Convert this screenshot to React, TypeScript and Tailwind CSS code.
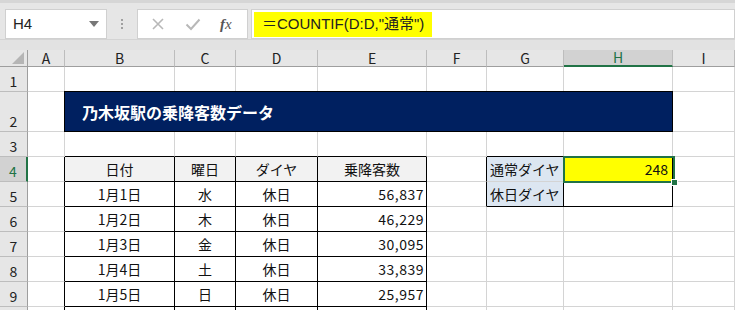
import React from "react";

const COLS = [28, 37, 110, 61, 82, 109, 60, 77, 109, 62];
const LETTERS = ["A", "B", "C", "D", "E", "F", "G", "H", "I"];
const ROWS = [25, 40, 25, 25, 25, 25, 25, 25, 25, 25];

const data = [
  ["1月1日", "水", "休日", "56,837"],
  ["1月2日", "木", "休日", "46,229"],
  ["1月3日", "金", "休日", "30,095"],
  ["1月4日", "土", "休日", "33,839"],
  ["1月5日", "日", "休日", "25,957"],
  ["", "", "", ""],
];

const font = { fontFamily: '"Noto Sans CJK JP", "Liberation Sans", sans-serif' };

function borderClasses(row: number, col: number) {
  const inTable = col >= 2 && col <= 5 && row >= 4;
  const inSide = (col === 7 || col === 8) && (row === 4 || row === 5);
  const rightBlack =
    inTable ||
    (col === 1 && row >= 4) ||
    (col === 6 && (row === 4 || row === 5)) ||
    inSide ||
    (col === 1 && row === 2);
  const bottomBlack =
    inTable ||
    (row === 3 && col >= 2 && col <= 5) ||
    (row === 3 && (col === 7 || col === 8)) ||
    (row === 5 && (col === 7 || col === 8));
  const rcls = rightBlack ? "border-r-black" : "border-r-[#d4d4d4]";
  const bcls = bottomBlack ? "border-b-black" : "border-b-[#d4d4d4]";
  return `border-r border-b ${rcls} ${bcls}`;
}

export default function App() {
  const cells: React.ReactNode[] = [];
  for (let r = 1; r <= 10; r++) {
    const sel = r === 4;
    cells.push(
      <div
        key={`rh${r}`}
        className={`flex items-end justify-center pb-[1px] text-[14px] leading-[18px] border-b border-b-[#bdbdbd] ${
          sel
            ? "bg-[#d2d2d2] text-[#217346] border-r-2 border-r-[#217346]"
            : "bg-[#e6e6e6] text-[#222] border-r border-r-[#9e9e9e]"
        }`}
        style={{ gridRow: r + 1, gridColumn: 1 }}
      >
        {r < 10 ? r : ""}
      </div>
    );
    for (let c = 1; c <= 9; c++) {
      const style: React.CSSProperties = { gridRow: r + 1, gridColumn: c + 1 };
      if (r === 2 && c >= 2 && c <= 8) {
        if (c === 2) {
          cells.push(
            <div
              key={`title`}
              style={{ gridRow: 3, gridColumn: "3 / 10" }}
              className="bg-[#002060] border border-black -ml-[1px] -mt-[1px] flex items-center pl-[17px] text-white font-bold text-[16px]"
            >
              乃木坂駅の乗降客数データ
            </div>
          );
        }
        continue;
      }
      let content: React.ReactNode = null;
      let cls = "";
      if (r === 4 && c >= 2 && c <= 5) {
        content = ["日付", "曜日", "ダイヤ", "乗降客数"][c - 2];
        cls = "bg-[#f2f2f2] flex items-center justify-center text-[14px] text-[#111]";
      } else if (r >= 5 && c >= 2 && c <= 5) {
        content = data[r - 5][c - 2];
        cls =
          c === 5
            ? "flex items-center justify-end pr-[2px] text-[14px] tracking-[0.5px] text-[#111]"
            : "flex items-center justify-center text-[14px] text-[#111]";
      } else if (c === 7 && (r === 4 || r === 5)) {
        content = r === 4 ? "通常ダイヤ" : "休日ダイヤ";
        cls = "bg-[#dce6f1] flex items-center pl-[3px] text-[14px] text-[#111]";
      } else if (c === 8 && r === 4) {
        content = "248";
        cls = "bg-[#ffff00] flex items-center justify-end pr-[4px] text-[14px] text-[#111]";
      }
      cells.push(
        <div key={`c${r}-${c}`} style={style} className={`${borderClasses(r, c)} overflow-hidden whitespace-nowrap ${cls}`}>
          {content}
        </div>
      );
    }
  }

  return (
    <div className="w-[735px] h-[310px] overflow-hidden bg-white relative" style={font}>
      {/* Toolbar */}
      <div className="h-[50px] bg-[#e6e6e6] border-t-[3px] border-t-[#d6d6d6] relative flex items-start pt-[6px]">
        <div className="ml-[5px] w-[102px] h-[30px] bg-white border border-[#d0d0d0] flex items-center justify-between px-[7px]">
          <span className="text-[15px] text-[#222]" style={{ fontFamily: '"Liberation Sans", sans-serif' }}>
            H4
          </span>
          <svg width="10" height="6" viewBox="0 0 10 6">
            <path d="M0 0 L10 0 L5 6 Z" fill="#777" />
          </svg>
        </div>
        <div className="ml-[14px] mt-[10px] flex flex-col gap-[2px]">
          <div className="w-[2px] h-[2px] bg-[#a0a0a0]" />
          <div className="w-[2px] h-[2px] bg-[#a0a0a0]" />
          <div className="w-[2px] h-[2px] bg-[#a0a0a0]" />
        </div>
        <div className="ml-[14px] w-[111px] h-[30px] bg-white border border-[#d0d0d0] flex items-center">
          <svg width="14" height="14" viewBox="0 0 14 14" className="ml-[13px]">
            <path d="M2 2 L12 12 M12 2 L2 12" stroke="#b8b8b8" strokeWidth="1.6" />
          </svg>
          <svg width="16" height="14" viewBox="0 0 16 14" className="ml-[20px]">
            <path d="M1.5 7.5 L6 12 L14.5 2.5" stroke="#b8b8b8" strokeWidth="2" fill="none" />
          </svg>
          <span
            className="ml-[19px] text-[15px] italic text-[#555]"
            style={{ fontFamily: '"Liberation Serif", serif' }}
          >
            <span className="font-bold">f</span>x
          </span>
        </div>
        <div className="ml-[3px] flex-1 h-[30px] bg-white border border-[#d0d0d0] flex items-center pl-[2px] relative z-10">
          <div
            className="h-[25px] bg-[#ffff00] flex items-center pl-[8px] pr-[8px] text-[15px] text-[#222] whitespace-nowrap"
            style={{ fontFamily: '"Liberation Sans", "Noto Sans CJK JP", sans-serif' }}
          >
            ＝COUNTIF(D:D,"通常")
          </div>
        </div>
        <div className="absolute left-0 right-0 bottom-0 h-[11px] bg-[#e2e2e2] border-t border-t-[#d4d4d4]" />
      </div>

      {/* Grid */}
      <div
        className="grid"
        style={{
          gridTemplateColumns: COLS.map((w) => `${w}px`).join(" "),
          gridTemplateRows: `17px ${ROWS.map((h) => `${h}px`).join(" ")}`,
        }}
      >
        <div
          className="bg-[#e6e6e6] border-r border-r-[#9e9e9e] border-b border-b-[#9e9e9e] relative"
          style={{ gridRow: 1, gridColumn: 1 }}
        >
          <svg width="12" height="12" viewBox="0 0 12 12" className="absolute right-[3px] bottom-[2px]">
            <path d="M12 0 L12 12 L0 12 Z" fill="#b5b5b5" />
          </svg>
        </div>
        {LETTERS.map((l, i) => (
          <div
            key={l}
            style={{ gridRow: 1, gridColumn: i + 2 }}
            className={`flex items-end justify-center text-[14px] leading-none pb-[1px] border-r border-r-[#bdbdbd] ${
              l === "H"
                ? "bg-[#d2d2d2] text-[#217346] border-b-2 border-b-[#217346]"
                : "bg-[#e6e6e6] text-[#222] border-b border-b-[#9e9e9e]"
            }`}
          >
            {l}
          </div>
        ))}
        {cells}
      </div>
      {/* selection outline */}
      <div className="absolute z-20 left-[563px] top-[156px] w-[112px] h-[27px] border-2 border-[#217346] pointer-events-none" />
      {/* fill handle */}
      <div className="absolute z-30 left-[671px] top-[179px] w-[7px] h-[7px] bg-[#217346] border border-white" />
    </div>
  );
}
